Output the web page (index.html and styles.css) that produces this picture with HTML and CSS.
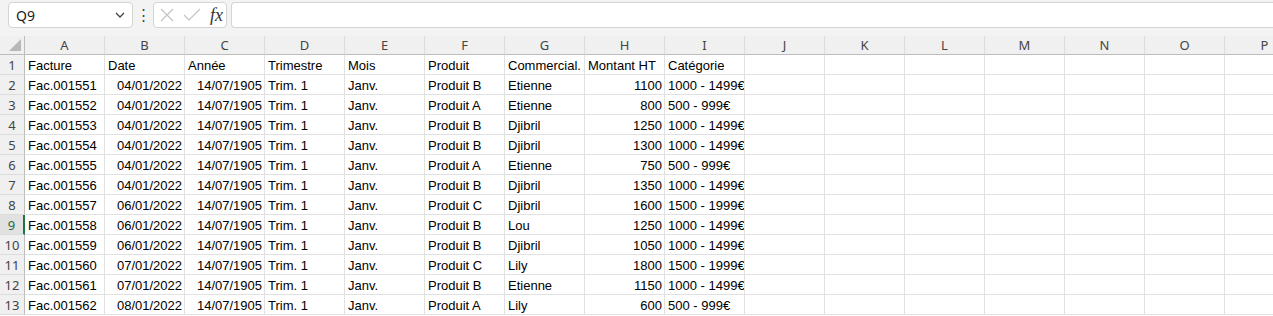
FILE: index.html
```html
<!DOCTYPE html>
<html lang="fr">
<head>
  <meta charset="UTF-8" />
  <meta name="viewport" content="width=device-width, initial-scale=1.0"/>
  <title>Factures</title>
  <link rel="stylesheet" href="styles.css">
</head>
<body>

  <div class="formula-bar">
    <div class="name-box">
      <span>Q9</span>
      <svg width="12" height="8" viewBox="0 0 12 8"><path d="M2 2 L6 6 L10 2" fill="none" stroke="#444" stroke-width="1.3"/></svg>
    </div>
    <div class="dots">⋮</div>
    <div class="fx-box">
      <svg width="16" height="16" viewBox="0 0 16 16"><path d="M2 2 L14 14 M14 2 L2 14" stroke="#c4c4c4" stroke-width="1.2"/></svg>
      <svg width="18" height="16" viewBox="0 0 18 16"><path d="M1 8 L6 13 L17 2" fill="none" stroke="#c4c4c4" stroke-width="1.2"/></svg>
      <span class="fx">fx</span>
    </div>
    <div class="formula-input"></div>
  </div>

  <div class="sheet" id="sheet">
    <!-- cellules générées -->
  </div>

  <script>
    const cols = ["A","B","C","D","E","F","G","H","I","J","K","L","M","N","O","P"];
    const rows = [
      ["Facture","Date","Année","Trimestre","Mois","Produit","Commercial.","Montant HT","Catégorie"],
      ["Fac.001551","04/01/2022","14/07/1905","Trim. 1","Janv.","Produit B","Etienne","1100","1000 - 1499€"],
      ["Fac.001552","04/01/2022","14/07/1905","Trim. 1","Janv.","Produit A","Etienne","800","500 - 999€"],
      ["Fac.001553","04/01/2022","14/07/1905","Trim. 1","Janv.","Produit B","Djibril","1250","1000 - 1499€"],
      ["Fac.001554","04/01/2022","14/07/1905","Trim. 1","Janv.","Produit B","Djibril","1300","1000 - 1499€"],
      ["Fac.001555","04/01/2022","14/07/1905","Trim. 1","Janv.","Produit A","Etienne","750","500 - 999€"],
      ["Fac.001556","04/01/2022","14/07/1905","Trim. 1","Janv.","Produit B","Djibril","1350","1000 - 1499€"],
      ["Fac.001557","06/01/2022","14/07/1905","Trim. 1","Janv.","Produit C","Djibril","1600","1500 - 1999€"],
      ["Fac.001558","06/01/2022","14/07/1905","Trim. 1","Janv.","Produit B","Lou","1250","1000 - 1499€"],
      ["Fac.001559","06/01/2022","14/07/1905","Trim. 1","Janv.","Produit B","Djibril","1050","1000 - 1499€"],
      ["Fac.001560","07/01/2022","14/07/1905","Trim. 1","Janv.","Produit C","Lily","1800","1500 - 1999€"],
      ["Fac.001561","07/01/2022","14/07/1905","Trim. 1","Janv.","Produit B","Etienne","1150","1000 - 1499€"],
      ["Fac.001562","08/01/2022","14/07/1905","Trim. 1","Janv.","Produit A","Lily","600","500 - 999€"]
    ];
    const rightCols = [1, 2, 7];
    const sheet = document.getElementById("sheet");

    function cell(cls, text) {
      const d = document.createElement("div");
      d.className = cls;
      d.textContent = text || "";
      sheet.appendChild(d);
    }

    cell("corner");
    cols.forEach(c => cell("col-head", c));

    rows.forEach((row, r) => {
      cell(r === 8 ? "row-head active" : "row-head", r + 1);
      cols.forEach((c, i) => {
        const right = r > 0 && rightCols.includes(i);
        cell(right ? "cell num" : "cell", row[i]);
      });
    });
  </script>
</body>
</html>
```

FILE: styles.css
```css
body {
  margin: 0;
  padding: 0;
  background: #fff;
  overflow: hidden;
  font-family: 'Liberation Sans', sans-serif;
}

.formula-bar {
  height: 36px;
  background: #f3f3f3;
  display: flex;
  align-items: flex-start;
  padding: 2px 0 0 8px;
  box-sizing: border-box;
}

.name-box {
  width: 125px;
  height: 26px;
  box-sizing: border-box;
  background: #fff;
  border: 1px solid #d4d4d4;
  border-radius: 4px;
  display: flex;
  align-items: center;
  justify-content: space-between;
  padding: 0 6px 0 7px;
  font-family: 'Noto Sans', sans-serif;
  font-size: 14px;
  color: #222;
}

.dots {
  width: 20px;
  text-align: center;
  font-size: 15px;
  line-height: 26px;
  color: #444;
}

.fx-box {
  width: 74px;
  height: 26px;
  box-sizing: border-box;
  background: #fff;
  border: 1px solid #d4d4d4;
  border-radius: 4px;
  display: flex;
  align-items: center;
  gap: 8px;
  padding: 0 0 0 5px;
}

.fx {
  font-family: 'Liberation Serif', serif;
  font-style: italic;
  font-size: 18px;
  color: #333;
  margin-left: 1px;
}

.formula-input {
  flex: 1;
  height: 26px;
  margin-left: 4px;
  background: #fff;
  border: 1px solid #d4d4d4;
  border-right: none;
  border-radius: 4px 0 0 4px;
  box-sizing: border-box;
}

.sheet {
  display: grid;
  grid-template-columns: 25px repeat(16, 80px);
  grid-template-rows: 19px;
  grid-auto-rows: 20px;
  font-size: 13px;
}

.corner {
  background: #f0f0f0;
  border-right: 1px solid #bdbdbd;
  border-bottom: 1px solid #bdbdbd;
  box-sizing: border-box;
  position: relative;
}

.corner::after {
  content: "";
  position: absolute;
  right: 3px;
  bottom: 3px;
  border-style: solid;
  border-width: 0 0 12px 12px;
  border-color: transparent transparent #b8b8b8 transparent;
}

.col-head {
  background: #f0f0f0;
  border-right: 1px solid #dcdcdc;
  border-bottom: 1px solid #bdbdbd;
  box-sizing: border-box;
  text-align: center;
  line-height: 18px;
  font-family: 'Noto Sans', sans-serif;
  font-size: 13px;
  color: #444;
}

.row-head {
  background: #f0f0f0;
  border-right: 1px solid #bdbdbd;
  border-bottom: 1px solid #dcdcdc;
  box-sizing: border-box;
  text-align: center;
  line-height: 20px;
  font-family: 'Noto Sans', sans-serif;
  font-size: 13px;
  color: #444;
}

.row-head.active {
  background: #e1e1e1;
  color: #1e6b41;
  border-right: 2px solid #217346;
}

.cell {
  border-right: 1px solid #e1e1e1;
  border-bottom: 1px solid #e1e1e1;
  box-sizing: border-box;
  padding: 1px 2px 0 3px;
  line-height: 19px;
  white-space: nowrap;
  overflow: hidden;
  color: #000;
}

.cell.num {
  text-align: right;
}
```
